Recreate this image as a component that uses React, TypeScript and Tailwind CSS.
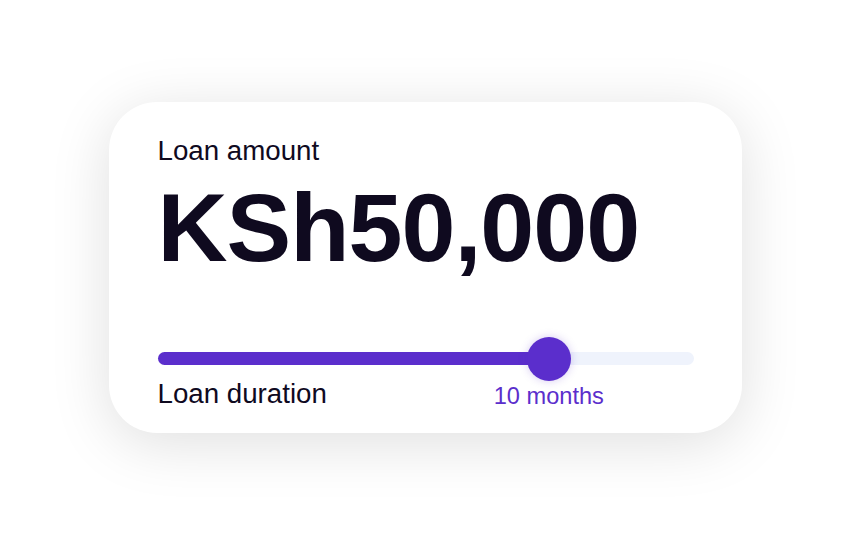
import { useState } from 'react';

export default function App() {
  const [progress] = useState(73);

  return (
    <div className="w-[850px] h-[548px] bg-white flex justify-center pt-[102px]" style={{ fontFamily: '"Liberation Sans", Arial, sans-serif' }}>
      <div className="w-[633px] h-[331px] rounded-[48px] bg-white shadow-[0_10px_60px_rgba(0,0,0,0.13)] pl-[49px] pr-[48px] pt-[33px] flex flex-col">
        <div className="text-[27.7px] leading-[32px] text-[#0f0a1f]">Loan amount</div>
        <div className="mt-[6px] text-[97px] leading-[110px] font-bold tracking-[-1px] text-[#0f0a1f]">KSh50,000</div>

        <div className="mt-[69px] relative h-[13px] rounded-full bg-[#eff3fc]">
          <div className="h-full rounded-full bg-[#5b2ecc]" style={{ width: `${progress}%` }} />
          <div
            className="absolute top-1/2 w-[44px] h-[44px] -ml-[22px] -mt-[22px] rounded-full bg-[#5b2ecc] shadow-[0_0_8px_rgba(91,46,204,0.25)]"
            style={{ left: `${progress}%` }}
          />
        </div>

        <div className="relative mt-[13px] h-[32px]">
          <span className="text-[27.7px] leading-[32px] text-[#0f0a1f]">Loan duration</span>
          <span
            className="absolute top-[3px] -translate-x-1/2 whitespace-nowrap text-[23.6px] leading-[30px] text-[#5b2ecc]"
            style={{ left: `${progress}%` }}
          >
            10 months
          </span>
        </div>
      </div>
    </div>
  );
}
